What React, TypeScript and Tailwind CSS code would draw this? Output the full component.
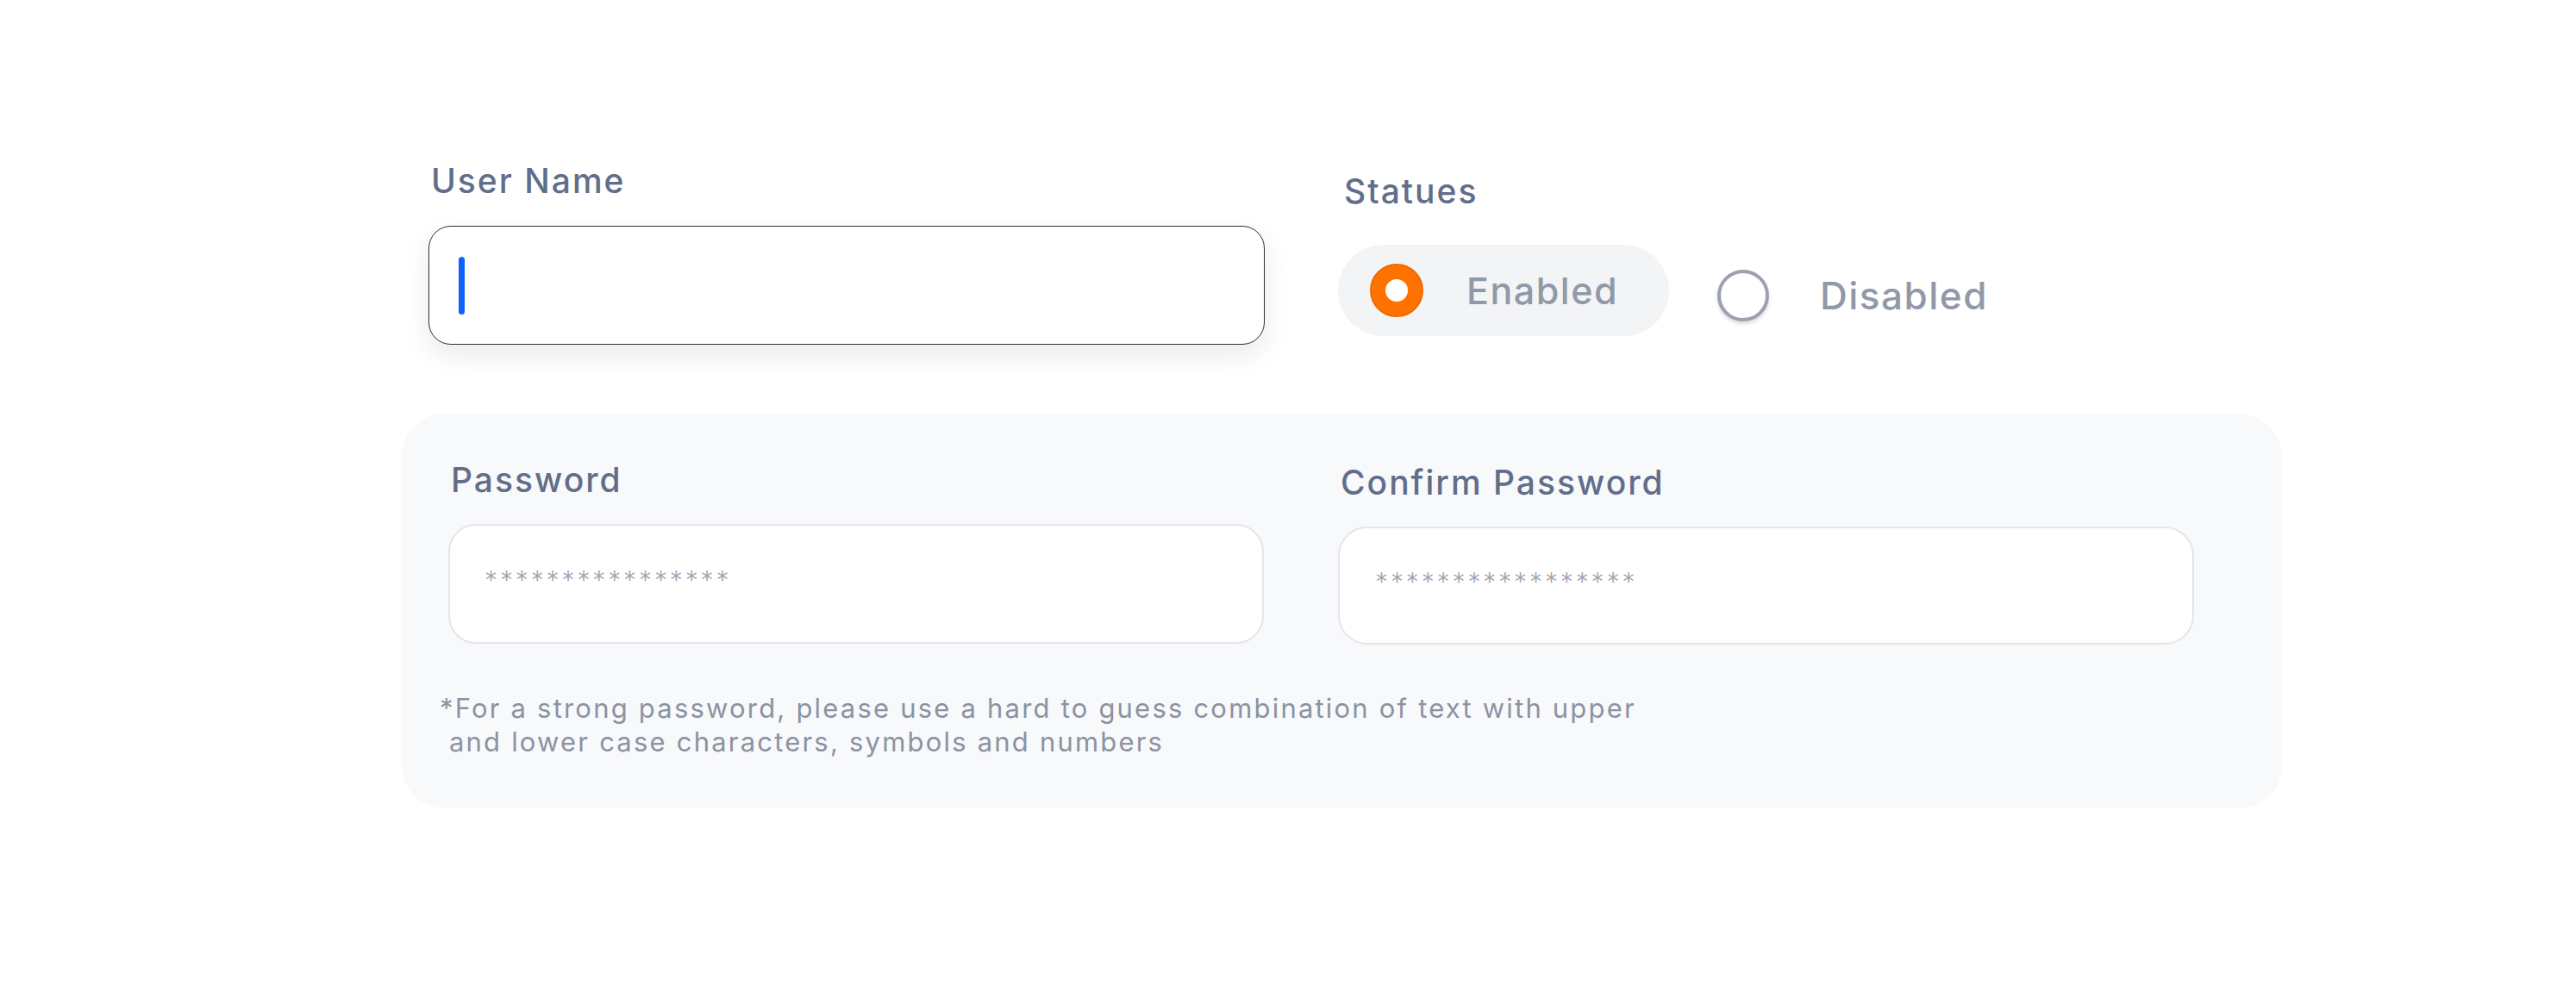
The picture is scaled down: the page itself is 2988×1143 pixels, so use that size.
export default function App() {
  return (
    <div className="w-[2988px] h-[1143px] bg-white pl-[466px] pt-[190px] font-['Inter',sans-serif]">
      {/* Top row */}
      <div className="flex items-start pl-[31px]">
        <div className="w-[970px]">
          <label className="block pl-[3px] text-[39px] leading-none font-medium tracking-[2px] text-[#616e8a]">
            User Name
          </label>
          <div className="mt-[33px] h-[138px] w-[970px] rounded-[26px] border border-[#2f2f2f] bg-white shadow-[0_12px_30px_rgba(16,24,40,0.09)] flex items-center pl-[34px]">
            <span className="h-[67px] w-[7px] rounded-full bg-[#0f62fe]" />
          </div>
        </div>

        <div className="ml-[85px] mt-[12px]">
          <label className="block pl-[7px] text-[39px] leading-none font-medium tracking-[2px] text-[#616e8a]">
            Statues
          </label>
          <div className="mt-[43px] flex items-center">
            <div className="h-[106px] w-[384px] rounded-full bg-[#f3f4f6] flex items-center pl-[37px]">
              <span className="h-[62px] w-[62px] rounded-full bg-[#ff7200] border-2 border-[#f26800] flex items-center justify-center">
                <span className="h-[26px] w-[26px] rounded-full bg-white" />
              </span>
              <span className="ml-[50px] text-[43px] leading-none font-medium tracking-[1.5px] text-[#9199a9]">
                Enabled
              </span>
            </div>
            <div className="ml-[56px] mt-[12px] flex items-center">
              <span className="h-[60px] w-[60px] rounded-full border-[4px] border-[#9ba2ae] bg-white shadow-[0_3px_4px_rgba(0,0,0,0.14)]" />
              <span className="ml-[59px] text-[44px] leading-none font-medium tracking-[1.5px] text-[#9199a9]">
                Disabled
              </span>
            </div>
          </div>
        </div>
      </div>

      {/* Password panel */}
      <div className="mt-[80px] h-[458px] w-[2181px] rounded-[50px] bg-[#f8f9fb] pl-[54px] pt-[57px]">
        <div className="flex items-start">
          <div className="w-[946px]">
            <label className="block pl-[3px] text-[39px] leading-none font-medium tracking-[2px] text-[#616e8a]">
              Password
            </label>
            <div className="mt-[32px] h-[139px] w-[946px] rounded-[32px] border-2 border-[#e3e5ea] bg-white flex items-center pl-[41px]">
              <span className="font-['DejaVu_Sans',sans-serif] text-[26px] leading-none tracking-[4.9px] text-[#9ca3b0] -mt-[10px]">
                ****************
              </span>
            </div>
          </div>
          <div className="ml-[86px] mt-[3px] w-[993px]">
            <label className="block pl-[3px] text-[39px] leading-none font-medium tracking-[2px] text-[#616e8a]">
              Confirm Password
            </label>
            <div className="mt-[32px] h-[137px] w-[993px] rounded-[34px] border-2 border-[#e3e5ea] bg-white flex items-center pl-[42px]">
              <span className="font-['DejaVu_Sans',sans-serif] text-[26px] leading-none tracking-[4.9px] text-[#9ca3b0] -mt-[10px]">
                *****************
              </span>
            </div>
          </div>
        </div>
        <p className="mt-[54px] -ml-[10px] whitespace-pre text-[31px] leading-[39px] tracking-[2.2px] text-[#8b93a1]">
          {"*For a strong password, please use a hard to guess combination of text with upper\n and lower case characters, symbols and numbers"}
        </p>
      </div>
    </div>
  )
}
